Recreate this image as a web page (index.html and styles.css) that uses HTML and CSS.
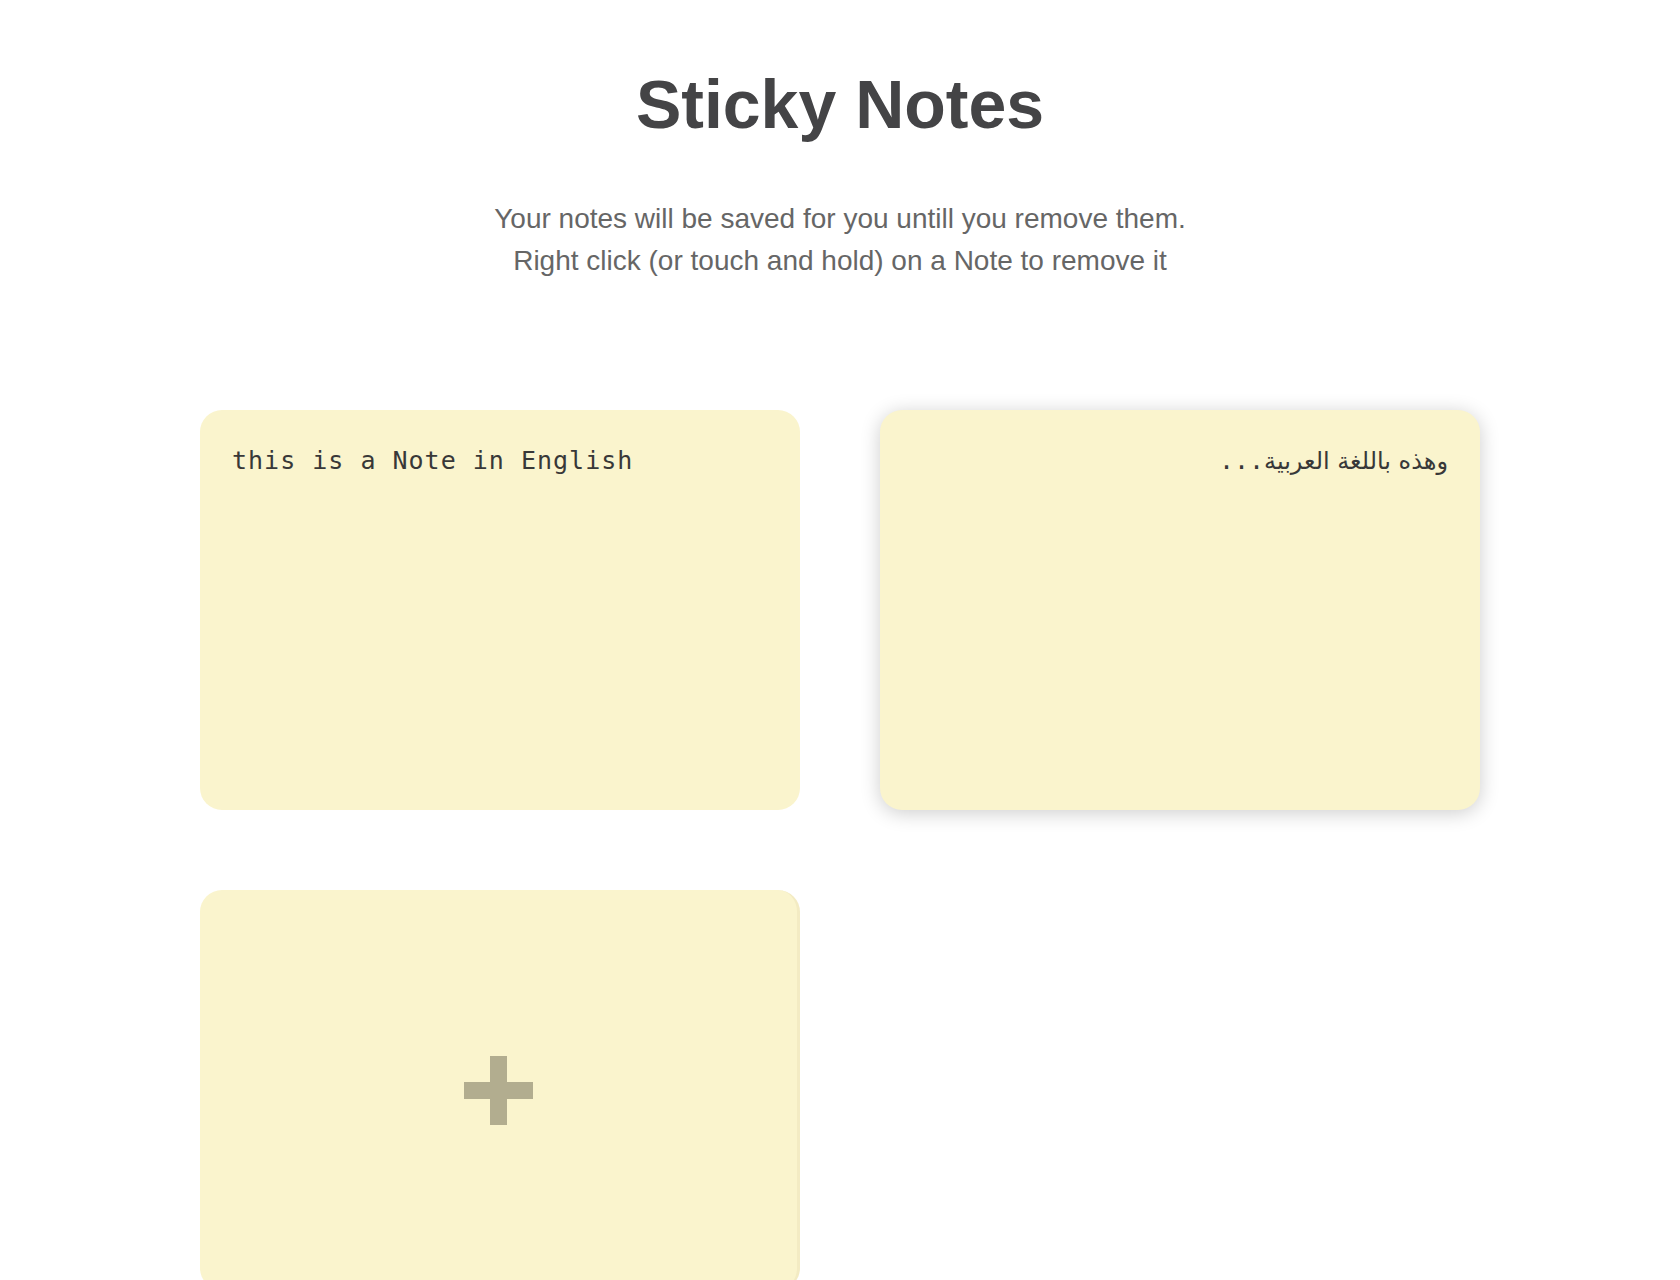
FILE: index.html
```html
<!DOCTYPE html>
<html lang="en">
<head>
<meta charset="utf-8">
<title>Sticky Notes</title>
<link rel="stylesheet" href="styles.css">
</head>
<body>
<header class="intro">
  <h1 class="title">Sticky Notes</h1>
  <p class="lead">Your notes will be saved for you untill you remove them.<br>Right click (or touch and hold) on a Note to remove it</p>
</header>
<main class="board">
  <div class="note">this is a Note in English</div>
  <div class="note note-rtl note-focus" dir="rtl"><span class="ar">وهذه باللغة العربية</span><span class="dots">...</span></div>
  <button class="add-note" type="button" aria-label="Add note"><span class="plus"></span></button>
</main>
</body>
</html>
```
FILE: styles.css
```css
html, body {
  margin: 0;
  padding: 0;
  background: #ffffff;
}
body {
  font-family: "Liberation Sans", Arial, sans-serif;
  overflow: hidden;
  height: 1280px;
}
.intro {
  padding-top: 65px;
  text-align: center;
}
.title {
  margin: 0;
  font-size: 68px;
  line-height: 78px;
  font-weight: bold;
  color: #444446;
}
.lead {
  margin: 55px 0 0;
  font-size: 28px;
  line-height: 42px;
  color: #666666;
  font-weight: normal;
}
.board {
  margin-top: 128px;
  display: grid;
  grid-template-columns: repeat(2, 600px);
  grid-auto-rows: 400px;
  gap: 80px;
  justify-content: center;
}
.note {
  box-sizing: border-box;
  background: #faf4cd;
  border-radius: 22px;
  padding: 32px;
  font-family: "DejaVu Sans Mono", monospace;
  font-size: 25px;
  letter-spacing: 1px;
  line-height: 1.5;
  color: #383838;
}
.note-rtl {
  text-align: right;
  letter-spacing: 0;
}
.ar {
  font-family: "DejaVu Sans", sans-serif;
  font-size: 24px;
}
.dots {
  letter-spacing: 1px;
}
.note-focus {
  box-shadow: 0 3px 20px rgba(0, 0, 0, 0.2);
}
.add-note {
  box-sizing: border-box;
  background: #faf4cd;
  border: none;
  border-right: 3px solid #f3ebc3;
  border-radius: 22px;
  padding: 0;
  display: flex;
  align-items: center;
  justify-content: center;
  cursor: pointer;
}
.plus {
  position: relative;
  width: 69px;
  height: 69px;
  display: block;
}
.plus::before,
.plus::after {
  content: "";
  position: absolute;
  background: #b2ad8f;
}
.plus::before {
  left: 0;
  top: 26px;
  width: 69px;
  height: 17px;
}
.plus::after {
  left: 26px;
  top: 0;
  width: 17px;
  height: 69px;
}
```
